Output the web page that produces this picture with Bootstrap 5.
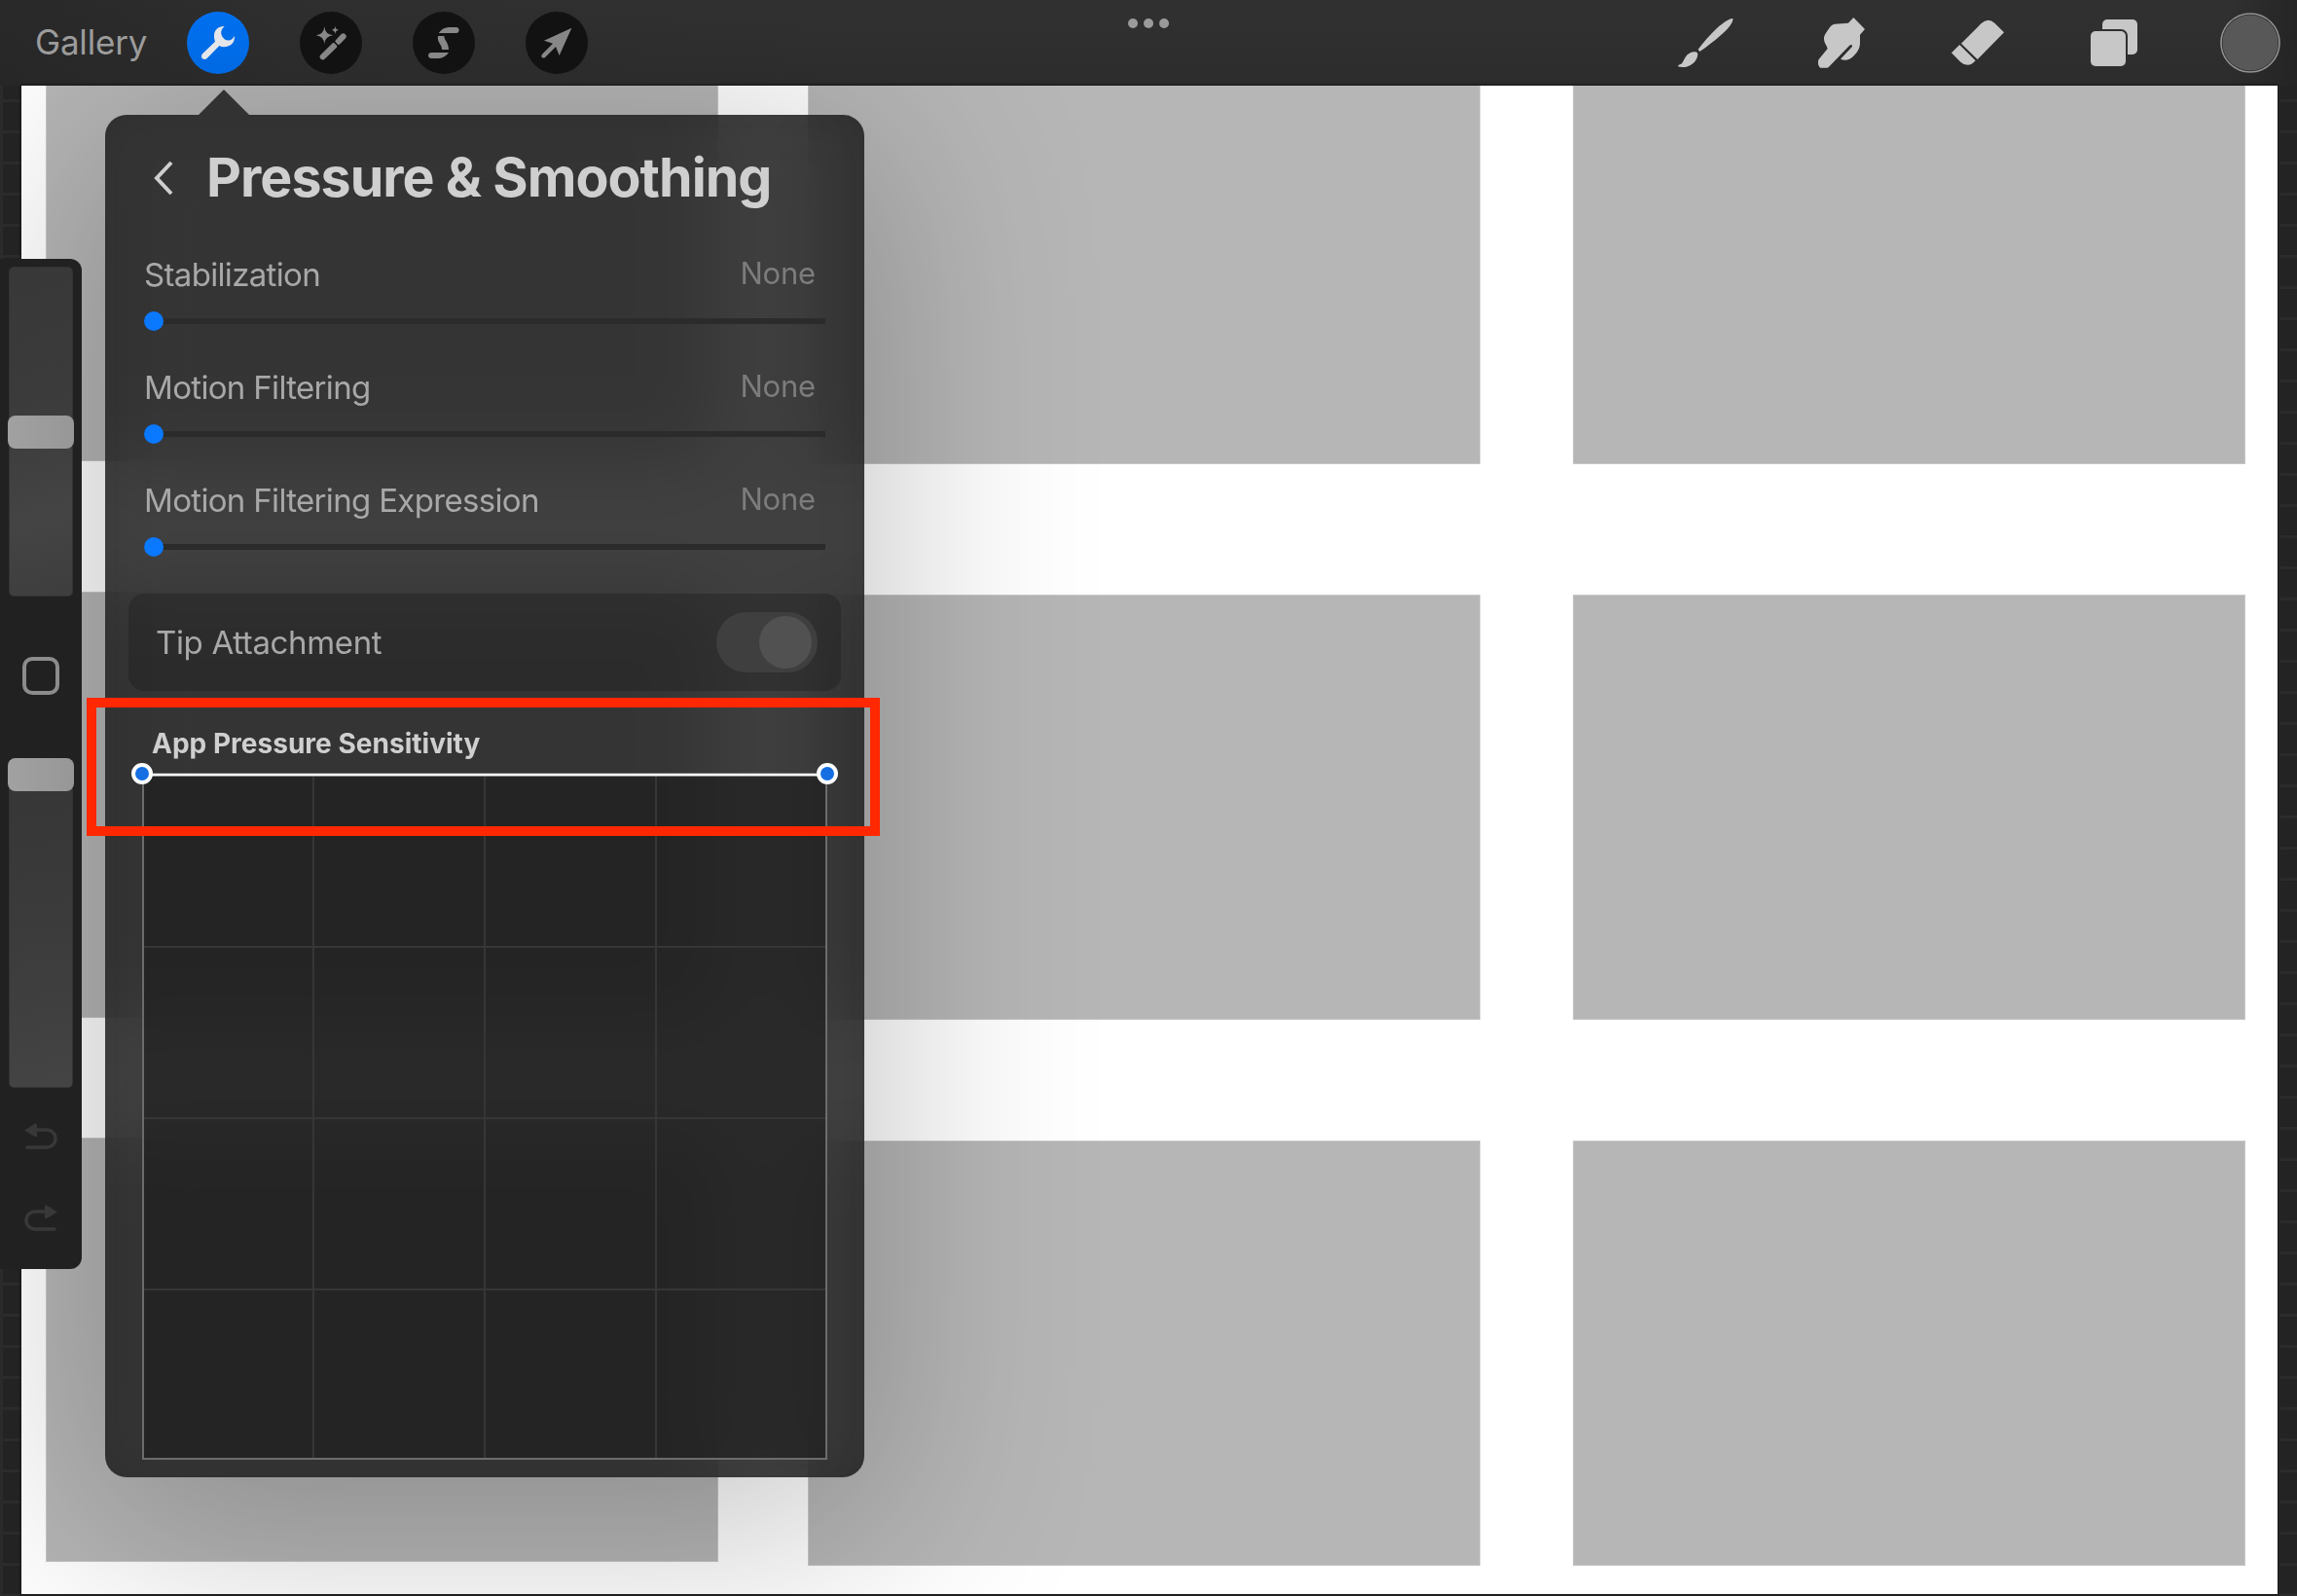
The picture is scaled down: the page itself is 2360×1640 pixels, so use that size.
<!DOCTYPE html>
<html lang="en">
<head>
<meta charset="utf-8">
<title>Pressure &amp; Smoothing</title>
<link href="https://cdn.jsdelivr.net/npm/bootstrap@5.3.0/dist/css/bootstrap.min.css" rel="stylesheet">
<style>
body{width:2360px;height:1640px;overflow:hidden;background:#232323;font-family:Inter,"Liberation Sans",sans-serif;color:#a9a9a9}
.topbar{height:88px;padding:0 16px 0 36px;background:linear-gradient(90deg,rgba(34,34,34,.55),rgba(40,40,40,.3) 12%,transparent 38%,transparent 97%,rgba(34,34,34,.8)),linear-gradient(#313131,#2c2c2c)}
.gallery{width:156px;font-size:35px;letter-spacing:-.2px;line-height:86px;height:88px;color:#9c9c9c}
.tools{gap:52px}
.tool{width:64px;height:64px;background:#121212;color:#878787}
.tool-on{background:linear-gradient(#0070f0,#0069e2);color:#e4e6ea}
.paint{gap:76px;color:#c7c7c7}
.paint svg,.tool svg{width:64px;height:64px;display:block}
.more{left:1159px;top:19px;gap:6px}
.more i{width:10px;height:10px;background:#9b9b9b}
.desk{height:1552px;padding:0 20px 2px 22px;background-color:#232323;background-image:linear-gradient(90deg,#2b2b2b 3px,transparent 3px),linear-gradient(#2b2b2b 3px,transparent 3px);background-size:2340px 100%,100% 32px;background-position:0 0,0 14px}
.sheet{background:#fff;padding-left:25px;box-shadow:0 0 2px 1px #151515}
.strip{width:691px}
.strip div{background:#b6b6b6;border:solid #c8c8c8;border-width:1px}
.shade{left:86px;top:30px;width:780px;height:1400px;border-radius:22px;box-shadow:0 38px 220px 22px rgba(0,0,0,.228)}
.side{left:0;top:266px;width:84px;height:1038px;background:#212121;border-radius:0 12px 12px 0;padding:8px 8px 0}
.track{margin:0 1px;width:66px;border-radius:5px;border:1px solid #333}
.track-a{height:339px;background:linear-gradient(165deg,#383838,#3b3b3b 40%,#444 75%,#3e3e3e)}
.track-b{height:339px;background:linear-gradient(170deg,#363636,#3b3b3b 50%,#444)}
.knob{left:-2px;width:68px;height:34px;border-radius:8px;background:linear-gradient(90deg,#a1a1a1,#979797)}
.sq{margin:62px 0 65px 15px;width:38px;height:39px;border:4px solid #8c8c8c;border-radius:10px}
.pop{left:108px;top:118px;width:780px;height:1400px;border-radius:22px;background:rgba(27,27,27,.84);backdrop-filter:blur(40px);overflow:hidden}
.pop-in{padding:0 24px;height:100%;box-shadow:inset 0 0 50px rgba(20,20,20,.16)}
.tip{left:204px;top:92px;width:52px;height:26px;background:#323232;clip-path:polygon(50% 0,100% 100%,0 100%)}
.head{height:130px;padding-left:26px}
.ttl{font-size:55.5px;font-weight:700;color:#cfcfcf;margin-left:34px;letter-spacing:-.96px;line-height:128px;height:130px;white-space:nowrap}
.setting{height:116px;padding:14px 16px 0 16px}
.lab{font-size:33px;line-height:40px;letter-spacing:-.67px;color:#a8a8a8}
.val{font-size:31px;line-height:38px;letter-spacing:-.2px;color:#7c7c7c;padding-right:10px}
.rail{height:6px;background:#2b2b2b;margin-top:25px}
.rail i{width:20px;height:20px;left:0;top:-7px;background:#0a78ff}
.attach{height:100px;margin-top:14px;border-radius:16px;background:rgba(30,30,30,.42);padding:0 24px 0 28px}
.attach .lab{letter-spacing:-.35px}
.switchy{width:104px;height:62px;background:#3f3f3f;padding:4px 6px}
.switchy i{width:54px;height:54px;background:#515151}
.sens{font-size:28px;font-weight:700;line-height:34px;color:#cfcfcf;margin:37px 0 0 24px;letter-spacing:.02px}
.plot{margin:14px 0 0 14px;width:704px;height:705px;display:block;overflow:visible}
.frame{left:89px;top:717px;width:815px;height:142px;border:10px solid #ff2800}
</style>
<script src="https://cdn.jsdelivr.net/npm/bootstrap@5.3.0/dist/js/bootstrap.bundle.min.js"></script>
</head>
<body class="position-relative m-0">
<nav class="topbar d-flex align-items-center justify-content-between">
  <div class="d-flex align-items-center">
    <span class="gallery">Gallery</span>
    <div class="tools d-flex">
      <span class="tool tool-on rounded-circle"><svg viewBox="36 36 192 192" fill="currentColor"><path d="M152 81C134 80 120 92 120 110C120 118 121 122 123 128L84 166C75 177 88 189 98 180L136 141C144 146 154 146 164 142C179 136 185 122 182 110C178 122 166 128 154 122C140 112 136 94 152 81Z"/></svg></span>
      <span class="tool rounded-circle"><svg viewBox="384 36 192 192" fill="currentColor"><path d="M460 82Q462 106 486 109Q462 112 460 136Q458 112 434 109Q458 106 460 82ZM493 80Q494 91 505 92.500Q494 94 493 105Q492 94 481 92.500Q492 91 493 80Z"/><path d="M455 175L490 141M502 129L518 112" fill="none" stroke="currentColor" stroke-width="18" stroke-linecap="round"/><path d="M484 123L508 147" stroke="#121212" stroke-width="5"/></svg></span>
      <span class="tool rounded-circle"><svg viewBox="732 36 192 192" fill="currentColor"><path d="M812 102C820 91 831 84 844 84H866C878 84 878 102 866 102ZM810 111H829C829 124 843 131 843 153H822C823 137 806 131 810 111ZM789 162H843C835 173 825 180 812 180H789C777 180 777 162 789 162Z"/></svg></span>
      <span class="tool rounded-circle"><svg viewBox="1080 36 192 192" fill="currentColor"><path d="M1222 86L1184 171L1173 144L1140 177C1134 182 1125 175 1131 167L1164 134L1137 125Z"/></svg></span>
    </div>
  </div>
  <div class="more position-absolute d-flex"><i class="rounded-circle"></i><i class="rounded-circle"></i><i class="rounded-circle"></i></div>
  <div class="paint d-flex">
    <svg viewBox="60 36 192 192" fill="currentColor"><path d="M241 57C243 68 228 88 207 106C185 126 160 145 139 159L134 152C149 132 171 107 192 87C213 68 231 57 241 57ZM125 160Q132 160 133 166C133 184 118 202 98 206Q84 209 72 205Q71 201 78 199C88 195 88 186 95 176C102 165 114 159 125 160Z"/></svg>
    <svg viewBox="480 36 192 192" fill="currentColor"><path d="M613 54L648 90L633 107V132C633 150 624 162 612 174C602 185 586 188 573 182L608 145Q611 140 607 138Q604 137 600 141L537 206Q535 209 530 209H511C504 205 502 190 506 183L533 150C530 138 521 132 522 115C524 106 533 94 542 82Q548 75 555 74L597 71Z"/></svg>
    <svg viewBox="900 36 192 192" fill="currentColor"><path d="M1077 100L995 183L945 134L1006 73Q1027 53 1048 71ZM940 138L989 187Q967 212 943 191L915 163Z"/></svg>
    <svg viewBox="1320 36 192 192" fill="currentColor"><rect x="1380" y="60" width="108" height="108" rx="15"/><rect x="1338" y="90" width="120" height="120" rx="20" fill="#2f2f2f"/><rect x="1344" y="96" width="108" height="108" rx="15"/></svg>
    <svg viewBox="0 0 64 64"><circle cx="32" cy="32" r="30" fill="#303030" stroke="#929292" stroke-width="1.600"/><circle cx="32" cy="32" r="28.500" fill="#585858"/></svg>
  </div>
</nav>
<main class="desk">
  <div class="sheet d-flex h-100">
    <div class="strip" style="margin-right:92px"><div class="border-top-0" style="height:386px"></div><div style="height:438px;margin:134px 0 123px"></div><div style="height:436px"></div></div>
    <div class="strip" style="margin-right:95px"><div class="border-top-0" style="height:389px"></div><div style="height:437px;margin:134px 0 124px"></div><div style="height:437px"></div></div>
    <div class="strip"><div class="border-top-0" style="height:389px"></div><div style="height:437px;margin:134px 0 124px"></div><div style="height:437px"></div></div>
  </div>
</main>
<div class="position-absolute overflow-hidden" style="left:22px;top:88px;width:2318px;height:1550px"><div class="shade position-absolute"></div></div>
<aside class="side position-absolute">
  <div class="track track-a position-relative"><div class="knob position-absolute" style="top:152px"></div></div>
  <div class="sq"></div>
  <div class="track track-b position-relative"><div class="knob position-absolute" style="top:-1px"></div></div>
  <svg class="d-block" style="margin:35px 0 0 16px" width="36" height="32" viewBox="0 0 36 32"><path d="M12 8H24A9 9 0 0 1 24 26H4" fill="none" stroke="#383838" stroke-width="3.500" stroke-linecap="round"/><path d="M1 8.500L12 1.500Q14 1 14 3V14Q14 16 12 15Z" fill="#383838"/></svg>
  <svg class="d-block" style="margin:52px 0 0 16px" width="36" height="32" viewBox="0 0 36 32"><path d="M24 8H12A9 9 0 0 0 12 26H32" fill="none" stroke="#383838" stroke-width="3.500" stroke-linecap="round"/><path d="M35 8.500L24 1.500Q22 1 22 3V14Q22 16 24 15Z" fill="#383838"/></svg>
</aside>
<div class="tip position-absolute"></div>
<section class="pop position-absolute"><div class="pop-in">
  <div class="head d-flex align-items-center">
    <svg width="20" height="36" viewBox="0 0 20 36"><path d="M18 2L3 18L18 34" fill="none" stroke="#cfcfcf" stroke-width="4"/></svg>
    <h1 class="ttl mb-0">Pressure &amp; Smoothing</h1>
  </div>
  <div class="setting"><div class="d-flex justify-content-between"><span class="lab">Stabilization</span><span class="val">None</span></div><div class="rail position-relative"><i class="position-absolute rounded-circle"></i></div></div>
  <div class="setting"><div class="d-flex justify-content-between"><span class="lab">Motion Filtering</span><span class="val">None</span></div><div class="rail position-relative"><i class="position-absolute rounded-circle"></i></div></div>
  <div class="setting"><div class="d-flex justify-content-between"><span class="lab">Motion Filtering Expression</span><span class="val">None</span></div><div class="rail position-relative"><i class="position-absolute rounded-circle"></i></div></div>
  <div class="attach d-flex align-items-center justify-content-between"><span class="lab">Tip Attachment</span><span class="switchy rounded-pill d-flex justify-content-end"><i class="rounded-circle"></i></span></div>
  <div class="sens">App Pressure Sensitivity</div>
  <svg class="plot" viewBox="0 0 704 705"><rect x="1" y="2" width="702" height="702" fill="rgba(24,24,24,.57)" stroke="#6c6c6c" stroke-width="2"/><path d="M176 3V703M352 3V703M528 3V703M2 178H702M2 354H702M2 530H702" stroke="#363636" stroke-width="2"/><path d="M0 1H704" stroke="#fff" stroke-width="2.500"/><g fill="#156fe3" stroke="#fff" stroke-width="4"><circle cx="0" cy="0" r="9"/><circle cx="704" cy="0" r="9"/></g></svg>
</div></section>
<div class="frame position-absolute"></div>
</body>
</html>
